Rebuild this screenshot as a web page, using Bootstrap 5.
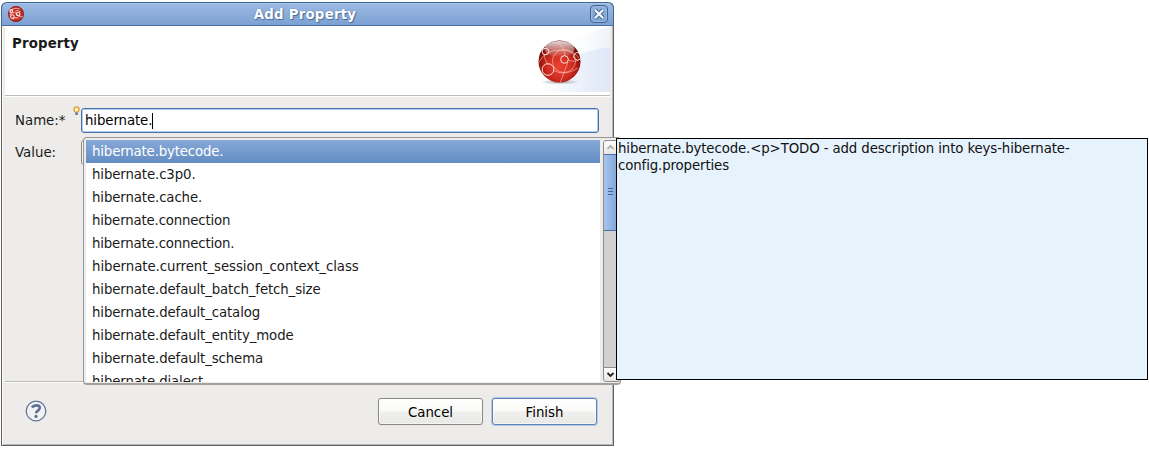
<!DOCTYPE html>
<html lang="en">
<head>
<meta charset="utf-8">
<title>Add Property</title>
<link href="https://cdn.jsdelivr.net/npm/bootstrap@5.3.0/dist/css/bootstrap.min.css" rel="stylesheet">
<style>
body{font-family:"DejaVu Sans",sans-serif;font-size:13.33px;line-height:17px;color:#1a1a1a;background:#fff;height:457px;overflow:hidden}
.dialog-window{width:613px;height:444px;margin:2px 0 0 1px;background:#edeceb;border:1px solid #61625f;border-top:0;border-radius:6px 6px 0 0;box-shadow:inset 1px 0 #fbfbfa,inset -1px -1px #b9b8b6}
.title-strip{height:24px;margin:0 -1px;padding:0 5px 0 6px;background:linear-gradient(#9dbae3,#7ba1d3);border:1px solid #44658f;border-bottom-color:#4a71a8;border-radius:6px 6px 0 0;box-shadow:inset 0 1px #a9c4e9}
.title-text{color:#fff;font-weight:bold;letter-spacing:.22px;margin-right:4px;text-shadow:1px 1px 1px #4a6b98,0 0 1px #4a6b98}
.close-box{width:18px;height:18px;border:1px solid #42638f;border-radius:4px;background:linear-gradient(#93b2de,#7da2d3);box-shadow:inset 0 0 0 1px #9bb9e3}
.banner{height:70px;margin:0 3px;background:#fff;border-bottom:1px solid #bdbcba;box-shadow:0 1px #fff}
.banner h1{font-size:13.33px;line-height:17px;font-weight:bold;letter-spacing:.15px;padding:9px 0 0 7px}
.field-area{height:286px;margin:0 3px;border-bottom:1px solid #b9b8b6;box-shadow:0 1px #fff}
.name-row{padding-top:12px}
.value-row{padding-top:7px}
.name-label{width:76px;padding-left:10px}
.name-input{width:518px;height:25px;padding:0 3px;border:1px solid #4a72a8;border-radius:3px;letter-spacing:-.1px;color:#000;background:#fff;box-shadow:inset 0 0 0 1px #b4cdef}
.caret{width:1px;height:16px;background:#000}
.bulb{left:73px;top:106px}
.value-box{width:518px;height:25px;border:1px solid #8a8886;border-radius:3px;background:#f5f4f3}
.action-row{height:59px;padding:0 16px 0 23px}
.help-mark{margin-bottom:2px}
.btn-gtk{width:105px;height:27px;padding:2px 0 0;border:1px solid #8c8a87;border-radius:3px;background:linear-gradient(#fff,#f9f9f8 48%,#f0f0ef 52%,#e9e8e6);font-size:13.33px;line-height:23px;color:#000;box-shadow:inset 0 0 0 1px #ffffff90,0 0 1px #c9c8c6}
.btn-primary-gtk{margin-left:9px;border-color:#5c81b5;box-shadow:inset 0 0 0 1px #ffffff90,0 0 0 1px #b5cae6}
.suggest{left:83px;top:137px;width:538px;height:248px;border:1px solid #999794;border-bottom:2px solid #a3a19e;border-radius:4px;background:#edeceb;padding:2px}
.suggest .list-group{flex:none;width:514px;height:242px;overflow:hidden;background:#fff;border-radius:0}
.suggest .list-group-item{flex:none;height:23px;padding:3px 6px;border:0;color:#1a1a1a;background:#fff;line-height:17px;letter-spacing:-.12px}
.suggest .list-group-item.wide-entry{letter-spacing:-.06px}
.suggest .list-group-item.tight-entry{letter-spacing:-.17px}
.suggest .list-group-item.active{margin:0;letter-spacing:-.16px;background:linear-gradient(#86a8d8,#648dc2);color:#fff}
.scroller{flex:none;width:17px;height:242px;margin-left:3px;background:#d3d1cf;border-left:1px solid #8e8c89;border-radius:4px}
.arrow{height:15px;background:linear-gradient(#fdfdfd,#e7e6e4);border:1px solid #908e8b;border-left:0}
.arrow-up{border-radius:3px 3px 0 0}
.arrow-down{border-radius:0 0 3px 3px}
.thumb{height:77px;margin-top:-1px;padding-bottom:2px;background:linear-gradient(90deg,#a7c4ec,#789fd4);border:solid #4a72a8;border-width:1px 0}
.info{left:616px;top:138px;width:532px;height:242px;border:1px solid #000;background:#e6f3fd;color:#111;letter-spacing:-.12px;padding:1px 60px 0 1px}
</style>
</head>
<body>
<main class="dialog-window">
  <header class="title-strip d-flex align-items-center justify-content-between">
    <svg width="16" height="16" viewBox="0 0 44 44"><circle cx="22" cy="22" r="21" fill="#bd2a20" stroke="#7e1613" stroke-width="2"/><path d="M5 17Q14 2 32 8M4 25Q16 12 25 23T40 28M13 37Q18 29 29 34M20 15Q26 9 34 16" fill="none" stroke="#ffd7d0" stroke-opacity=".7" stroke-width="3"/><g fill="none" stroke="#ffe5e0" stroke-width="3"><circle cx="12" cy="29" r="5"/><circle cx="28" cy="22" r="5"/><circle cx="9" cy="14" r="4"/></g></svg>
    <span class="title-text">Add Property</span>
    <span class="close-box d-flex align-items-center justify-content-center"><svg width="12" height="12" viewBox="0 0 12 12"><path d="M2 2L10 10M10 2L2 10" stroke="#42638f" stroke-width="4.2"/><path d="M2 2L10 10M10 2L2 10" stroke="#f4f8ff" stroke-width="2.4"/></svg></span>
  </header>
  <section class="banner d-flex justify-content-between">
    <h1 class="m-0">Property</h1>
    <svg width="76" height="66" viewBox="0 0 76 66">
      <defs>
        <linearGradient id="sky"><stop stop-color="#fff"/><stop offset="1" stop-color="#dfe7f7"/></linearGradient>
        <linearGradient id="sky2"><stop offset=".3" stop-color="#fff" stop-opacity="0"/><stop offset="1" stop-color="#edf2fb"/></linearGradient>
        <radialGradient id="ball" cx=".5" cy=".62" r=".56"><stop stop-color="#ec4230"/><stop offset=".55" stop-color="#cf2c20"/><stop offset=".82" stop-color="#a0170f"/><stop offset="1" stop-color="#650504"/></radialGradient>
        <linearGradient id="shine" x2="0" y2="1"><stop stop-color="#fff" stop-opacity=".85"/><stop offset="1" stop-color="#fff" stop-opacity=".05"/></linearGradient>
        <radialGradient id="shade"><stop stop-color="#777" stop-opacity=".65"/><stop offset="1" stop-color="#777" stop-opacity="0"/></radialGradient>
        <clipPath id="round"><circle cx="25.5" cy="35.5" r="20.5"/></clipPath>
      </defs>
      <path d="M0 66Q32 8 76 1V66Z" fill="url(#sky2)"/><path d="M4 66Q28 26 76 21V66Z" fill="url(#sky)"/>
      <ellipse cx="26" cy="56" rx="20" ry="2.5" fill="url(#shade)"/>
      <circle cx="25.5" cy="35.5" r="21" fill="url(#ball)"/>
      <ellipse cx="25.5" cy="23" rx="15" ry="8" fill="url(#shine)"/>
      <g clip-path="url(#round)" fill="none" stroke="#ffd3cb" stroke-opacity=".55" stroke-width="1">
        <circle cx="30" cy="35" r="11.5"/><path d="M20 15Q31 20 31 30M5 36Q11 24 27 24Q40 24 45 32M10 28Q11 36 15 39M19 44Q30 51 44 42M34 34Q41 37 46 33M34 36Q29 49 26 57"/></g>
      <g fill="none" stroke="#ffe0da" stroke-width="1"><circle cx="30.5" cy="33.5" r="3.8"/><circle cx="14" cy="43.5" r="5.8"/><circle cx="11.5" cy="25.5" r="3.3"/><path d="M45 27A3.7 3.7 0 1 0 46 33"/></g>
    </svg>
  </section>
  <form class="field-area">
    <div class="name-row d-flex align-items-center">
      <label class="name-label">Name:*</label>
      <div class="name-input d-flex align-items-center"><span>hibernate.</span><i class="caret"></i></div>
    </div>
    <div class="value-row d-flex align-items-center">
      <label class="name-label">Value:</label><div class="value-box"></div>
    </div>
  </form>
  <footer class="action-row d-flex align-items-center">
    <svg class="help-mark" width="22" height="22" viewBox="0 0 22 22"><circle cx="11" cy="11" r="9.8" fill="#f1f2f4" stroke="#5b6f95" stroke-width="1.2"/><path d="M6.9 7.5Q8.3 5.4 11.3 5.4C15.7 5.4 15.5 8.8 13.2 10.4Q11.1 11.8 11.1 13.3" fill="none" stroke="#5b6f95" stroke-width="2.6"/><circle cx="11" cy="16.4" r="1.6" fill="#5b6f95"/></svg>
    <button class="btn btn-gtk d-flex align-items-center justify-content-center ms-auto" type="button">Cancel</button>
    <button class="btn btn-gtk btn-primary-gtk d-flex align-items-center justify-content-center" type="button">Finish</button>
  </footer>
</main>
<svg class="bulb position-absolute" width="7" height="11" viewBox="0 0 7 11"><path d="M2.3 6.2L1 4.6V2.3L2.3 1H4.7L6 2.3V4.6L4.7 6.2Z" fill="#fff0b8" stroke="#e28b18" stroke-width="1.1"/><path d="M2.3 6.5H4.7V9H2.3Z" fill="#5578a5"/></svg>
<div class="suggest position-absolute d-flex">
  <ul class="list-group">
    <li class="list-group-item active">hibernate.bytecode.</li>
    <li class="list-group-item">hibernate.c3p0.</li>
    <li class="list-group-item">hibernate.cache.</li>
    <li class="list-group-item tight-entry">hibernate.connection</li>
    <li class="list-group-item tight-entry">hibernate.connection.</li>
    <li class="list-group-item wide-entry">hibernate.current_session_context_class</li>
    <li class="list-group-item">hibernate.default_batch_fetch_size</li>
    <li class="list-group-item">hibernate.default_catalog</li>
    <li class="list-group-item">hibernate.default_entity_mode</li>
    <li class="list-group-item">hibernate.default_schema</li>
    <li class="list-group-item">hibernate.dialect</li>
  </ul>
  <div class="scroller d-flex flex-column">
    <div class="arrow arrow-up d-flex"><svg width="14" height="13" viewBox="0 0 14 13"><path d="M3.5 8L6.5 5L9.5 8" fill="none" stroke="#aaa8a5" stroke-width="1.6"/></svg></div>
    <div class="thumb d-flex align-items-center"><svg width="14" height="9" viewBox="0 0 14 9"><path d="M4 1.5H9M4 4.5H9M4 7.5H9" stroke="#41669c"/></svg></div>
    <div class="arrow arrow-down d-flex mt-auto"><svg width="14" height="13" viewBox="0 0 14 13"><path d="M3.5 5L6.5 8L9.5 5" fill="none" stroke="#222" stroke-width="1.8"/></svg></div>
  </div>
</div>
<aside class="info position-absolute">hibernate.bytecode.&lt;p&gt;TODO - add description into keys-hibernate-config.properties</aside>
<script src="https://cdn.jsdelivr.net/npm/bootstrap@5.3.0/dist/js/bootstrap.bundle.min.js"></script>
</body>
</html>
